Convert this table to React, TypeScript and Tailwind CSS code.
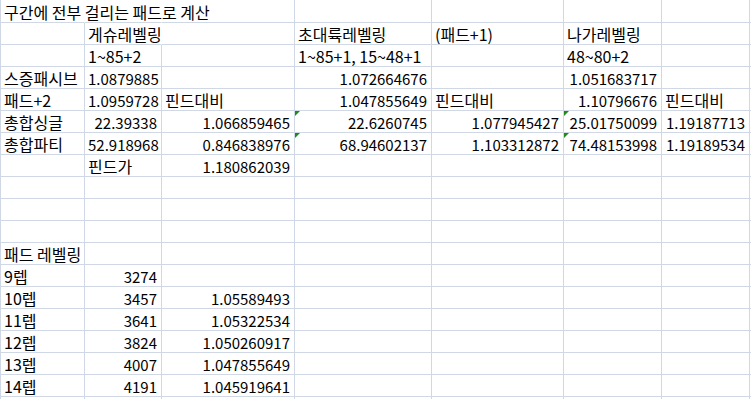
type Cell = { t?: string; r?: boolean; tri?: boolean; open?: boolean }

const c = (t: string, opts: Partial<Cell> = {}): Cell => ({ t, ...opts })
const n = (t: string, tri = false): Cell => ({ t, r: true, tri })
const e: Cell = {}

// A..G columns, plus a sliver of H at the right edge
const rows: Cell[][] = [
  [c('구간에 전부 걸리는 패드로 계산', { open: true }), { open: true }, e, e, e, e, e],
  [e, c('게슈레벨링', { open: true }), e, c('초대륙레벨링'), c('(패드+1)'), c('나가레벨링'), e],
  [e, c('1~85+2'), e, c('1~85+1, 15~48+1'), e, c('48~80+2'), e],
  [c('스증패시브'), n('1.0879885'), e, n('1.072664676'), e, n('1.051683717'), e],
  [c('패드+2'), n('1.0959728'), c('핀드대비'), n('1.047855649'), c('핀드대비'), n('1.10796676'), c('핀드대비')],
  [c('총합싱글'), n('22.39338'), n('1.066859465'), n('22.6260745', true), n('1.077945427'), n('25.01750099', true), n('1.19187713')],
  [c('총합파티'), n('52.918968'), n('0.846838976'), n('68.94602137', true), n('1.103312872'), n('74.48153998', true), n('1.19189534')],
  [e, c('핀드가'), n('1.180862039'), e, e, e, e],
  [e, e, e, e, e, e, e],
  [e, e, e, e, e, e, e],
  [e, e, e, e, e, e, e],
  [c('패드 레벨링'), e, e, e, e, e, e],
  [c('9렙'), n('3274'), e, e, e, e, e],
  [c('10렙'), n('3457'), n('1.05589493'), e, e, e, e],
  [c('11렙'), n('3641'), n('1.05322534'), e, e, e, e],
  [c('12렙'), n('3824'), n('1.050260917'), e, e, e, e],
  [c('13렙'), n('4007'), n('1.047855649'), e, e, e, e],
  [c('14렙'), n('4191'), n('1.045919641'), e, e, e, e],
  [e, e, e, e, e, e, e],
]

const SheetCell = ({ cell, first }: { cell: Cell; first: boolean }) => (
  <div
    className={`relative whitespace-nowrap border-b border-r border-b-[#d0d7e5] px-[3px] leading-[21px] ${
      cell.open ? 'border-r-transparent' : 'border-r-[#d0d7e5]'
    } ${first ? 'h-[23px] pt-[2px]' : 'h-[22px] pt-[1px]'} ${
      cell.r ? 'pr-[4px] text-right text-[15px]' : 'text-left'
    }`}
  >
    {cell.tri && (
      <span className="absolute left-0 top-0 h-0 w-0 border-r-[5px] border-t-[5px] border-r-transparent border-t-[#1f8a1f]" />
    )}
    {cell.t}
  </div>
)

export default function App() {
  return (
    <div
      className="h-[399px] w-[751px] overflow-hidden bg-white text-[16px] text-black"
      style={{ fontFamily: '"Noto Sans CJK KR", "Noto Sans", sans-serif' }}
    >
      <div className="grid w-[800px] grid-cols-[85px_77px_133px_137px_132px_98px_88px_50px] [&>div:nth-child(8n+1)]:border-l [&>div:nth-child(8n+1)]:border-l-[#d0d7e5]">
        {rows.map((row, i) =>
          [...row, e].map((cell, j) => <SheetCell key={`${i}-${j}`} cell={cell} first={i === 0} />)
        )}
      </div>
    </div>
  )
}
